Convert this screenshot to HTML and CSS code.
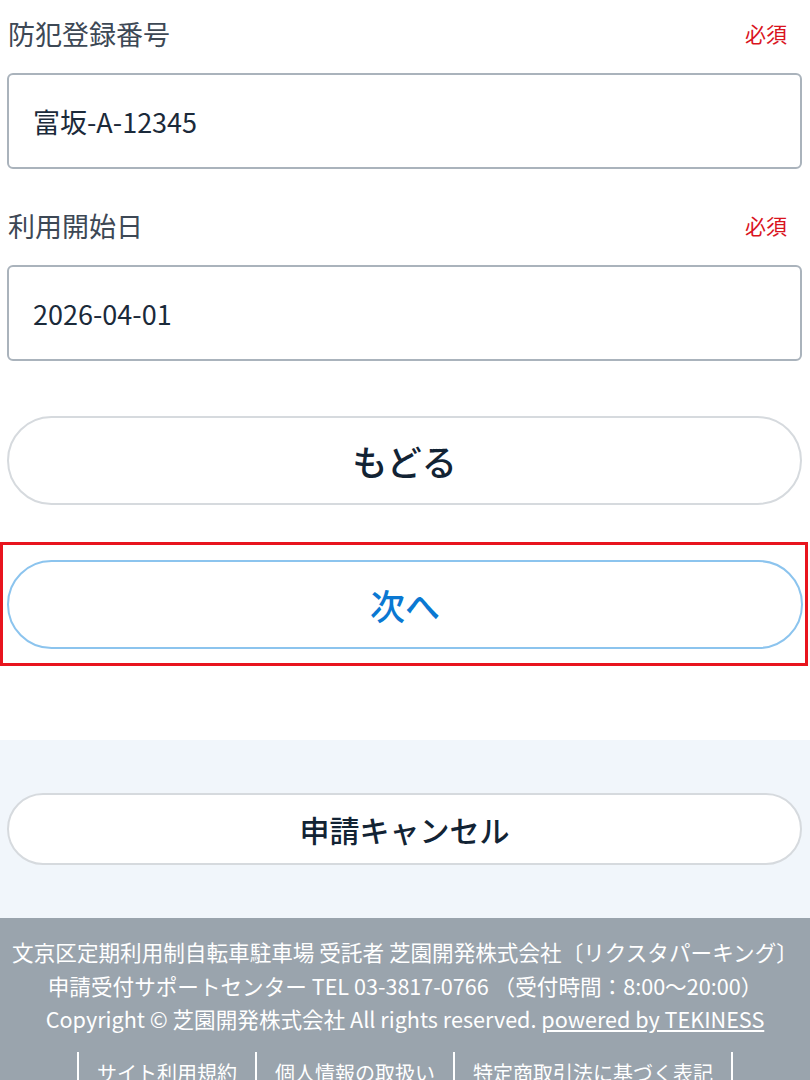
FILE: index.html
```html
<!DOCTYPE html>
<html lang="ja">
  <head>
    <meta charset="UTF-8" />
    <meta name="viewport" content="width=device-width, initial-scale=1.0" />
    <title>申請</title>
    <link rel="stylesheet" href="styles.css">
  </head>

  <body>
    <div class="form">
      <div class="field">
        <div class="field-head">
          <span class="label">防犯登録番号</span>
          <span class="required">必須</span>
        </div>
        <div class="input">富坂-A-12345</div>
      </div>

      <div class="field">
        <div class="field-head">
          <span class="label">利用開始日</span>
          <span class="required">必須</span>
        </div>
        <div class="input">2026-04-01</div>
      </div>

      <button class="btn btn-back">もどる</button>

      <div class="highlight">
        <button class="btn btn-next">次へ</button>
      </div>
    </div>

    <div class="cancel-area">
      <button class="btn btn-cancel">申請キャンセル</button>
    </div>

    <footer class="footer">
      <p>文京区定期利用制自転車駐車場 受託者 芝園開発株式会社〔リクスタパーキング〕</p>
      <p>申請受付サポートセンター TEL 03-3817-0766 （受付時間：8:00～20:00）</p>
      <p>Copyright © 芝園開発株式会社 All rights reserved. <a href="#">powered by TEKINESS</a></p>
      <ul class="footer-links">
        <li><a href="#">サイト利用規約</a></li>
        <li><a href="#">個人情報の取扱い</a></li>
        <li><a href="#">特定商取引法に基づく表記</a></li>
      </ul>
    </footer>
  </body>
</html>
```

FILE: styles.css
```css
body {
  margin: 0;
  background-color: #ffffff;
  font-family: "Noto Sans CJK JP", "Noto Sans", sans-serif;
  color: #1b2a3a;
}

.form {
  padding: 16px 8px 74px 7px;
}

.field {
  margin-bottom: 39px;
}

.field-head {
  display: flex;
  justify-content: space-between;
  align-items: center;
  height: 34px;
  margin-bottom: 23px;
  padding-left: 1px;
}

.label {
  font-size: 27px;
  color: #3d4855;
}

.required {
  font-size: 21px;
  color: #d9141e;
  margin-right: 15px;
}

.input {
  box-sizing: border-box;
  height: 96px;
  padding: 0 24px;
  display: flex;
  align-items: center;
  border: 2px solid #aab3bc;
  border-radius: 6px;
  font-size: 27px;
  color: #1b2a3a;
}

.btn {
  display: block;
  box-sizing: border-box;
  width: 100%;
  background-color: #ffffff;
  border: 2px solid #d6dade;
  border-radius: 999px;
  font-family: "Noto Sans CJK JP", "Noto Sans", sans-serif;
  font-weight: 500;
  color: #122334;
  cursor: pointer;
}

.btn-back {
  height: 89px;
  margin-top: 55px;
  font-size: 35px;
}

.highlight {
  margin: 37px -6px 0 -7px;
  padding: 15px 2px 14px 4px;
  border: 3px solid #e8141e;
}

.btn-next {
  height: 89px;
  border-color: #8cc4ee;
  color: #0a78d2;
  font-size: 35px;
}

.cancel-area {
  background-color: #f1f6fb;
  padding: 53px 8px 53px 7px;
}

.btn-cancel {
  height: 72px;
  font-size: 30px;
}

.footer {
  background-color: #9aa4ad;
  color: #ffffff;
  text-align: center;
  padding: 17px 0 0;
  font-size: 21.6px;
  line-height: 33.5px;
  height: 145px;
  overflow: hidden;
}

.footer p {
  margin: 0;
}

.footer a {
  color: #ffffff;
}

.footer-links {
  display: flex;
  justify-content: center;
  list-style: none;
  margin: 16px 0 0;
  padding: 0;
  font-size: 20px;
}

.footer-links li {
  padding: 4px 18px 0;
  border-left: 2px solid #ffffff;
}

.footer-links li:last-child {
  border-right: 2px solid #ffffff;
}
```
